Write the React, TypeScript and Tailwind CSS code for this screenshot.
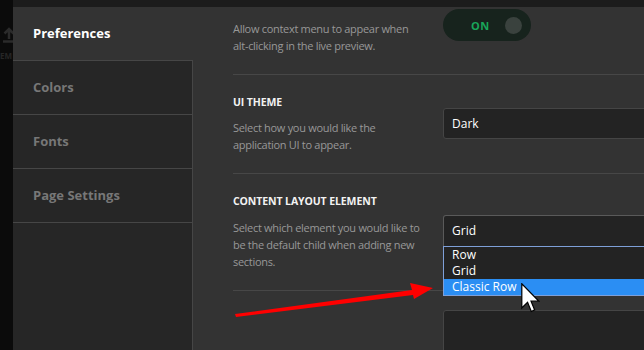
import React from "react";

const font = { fontFamily: '"Open Sans", "Noto Sans", "Liberation Sans", sans-serif' };

const tabs = ["Preferences", "Colors", "Fonts", "Page Settings"];

function Divider() {
  return <div className="h-px bg-[#474747]" />;
}

function Toggle() {
  return (
    <div className="flex h-[32px] w-[88px] items-center rounded-full bg-[#17231d] pl-[28px] pr-[9px]">
      <span className="text-[11px] font-bold leading-none tracking-[0.5px] text-[#19a65a]">ON</span>
      <span className="ml-auto h-[17px] w-[17px] rounded-full bg-[#3a423e]" />
    </div>
  );
}

function Section({
  title,
  text,
  pt,
  descGap,
  selectGap,
  children,
}: {
  title: string;
  text: string;
  pt: string;
  descGap: string;
  selectGap: string;
  children: React.ReactNode;
}) {
  return (
    <div className={`flex items-start pb-[20px] ${pt}`}>
      <div className="w-[210px] shrink-0">
        <div className="text-[10.5px] font-bold uppercase leading-[14px] tracking-[-0.1px] text-[#f2f2f2]">{title}</div>
        <p className={`w-[196px] text-[11px] leading-[17px] tracking-[-0.3px] text-[#989898] ${descGap}`}>{text}</p>
      </div>
      <div className={`relative w-[230px] shrink-0 ${selectGap}`}>{children}</div>
    </div>
  );
}

export default function App() {
  return (
    <div className="relative flex h-[350px] w-[644px] overflow-hidden bg-[#0b0b0b]" style={font}>
      {/* editor behind the dialog */}
      <div className="relative w-[13px] shrink-0 overflow-hidden">
        <svg className="absolute left-[2px] top-[27px]" width="14" height="16" viewBox="0 0 14 16" fill="none" stroke="#2b2b2b" strokeWidth="2.5">
          <path d="M7 12V2M2.5 6.5 7 2l4.5 4.5M1 14.5h12" />
        </svg>
        <span className="absolute left-0 top-[51px] text-[8px] font-bold leading-[10px] text-[#262626]">EM</span>
      </div>

      <div className="flex min-w-0 flex-1 flex-col">
        <div className="h-[7px] shrink-0 bg-[#1c1c1c]" />
        <div className="flex min-h-0 flex-1 bg-[#333333]">
          {/* sidebar */}
          <div className="flex w-[180px] shrink-0 flex-col">
            {tabs.map((t, i) => (
              <div
                key={t}
                className={`flex h-[54px] shrink-0 items-center border-b border-[#464646] pl-[20px] pt-[1px] text-[13px] font-bold ${
                  i === 0 ? "bg-[#333333] text-white" : "border-r bg-[#262626] text-[#777777]"
                }`}
              >
                {t}
              </div>
            ))}
            <div className="flex-1 border-r border-[#464646] bg-[#262626]" />
          </div>

          {/* content */}
          <div className="min-w-0 flex-1 pl-[40px]">
            <div className="flex h-[67px]">
              <div className="w-[210px] shrink-0 pt-[13px]">
                <p className="w-[188px] text-[11px] leading-[17px] tracking-[-0.3px] text-[#989898]">
                  Allow context menu to appear when alt-clicking in the live preview.
                </p>
              </div>
              <div className="mt-[2px]">
                <Toggle />
              </div>
            </div>
            <Divider />

            <Section
              title="UI Theme"
              text="Select how you would like the application UI to appear."
              pt="pt-[20px]"
              descGap="mt-[10px]"
              selectGap="mt-[13px]"
            >
              <div className="flex h-[31px] items-center rounded-[3px] border border-[#454545] bg-[#232323] pl-[8px] text-[12px] text-white">
                Dark
              </div>
            </Section>
            <Divider />

            <Section
              title="Content Layout Element"
              text="Select which element you would like to be the default child when adding new sections."
              pt="pt-[20px]"
              descGap="mt-[11px]"
              selectGap="mt-[21px]"
            >
              <div className="flex h-[31px] items-center rounded-t-[3px] border border-b-0 border-[#5a5a5a] bg-[#232323] pl-[8px] text-[12px] text-white">
                Grid
              </div>
              <div className="absolute left-0 top-full z-10 w-full border border-[#7e9fd8] bg-[#232323] text-[12px] text-white">
                <div className="h-[16px] pl-[8px] leading-[16px]">Row</div>
                <div className="h-[16px] pl-[8px] leading-[16px]">Grid</div>
                <div className="h-[16px] bg-[#2b8ef3] pl-[8px] leading-[16px]">Classic Row</div>
              </div>
            </Section>
            <Divider />

            <div className="flex pt-[19px]">
              <div className="w-[210px] shrink-0" />
              <div className="h-[60px] w-[230px] shrink-0 rounded-[3px] border border-[#454545] bg-[#232323]" />
            </div>
          </div>
        </div>
      </div>

      {/* annotation arrow */}
      <svg className="pointer-events-none absolute left-0 top-0 z-20" width="644" height="350">
        <polygon points="235,314 412,290 410,283 433,288 414,299 413,295 236,317" fill="#ff0000" />
      </svg>

      {/* mouse cursor */}
      <svg className="pointer-events-none absolute left-[521px] top-[283px] z-30" width="19" height="31" viewBox="0 0 12.5 20.5">
        <path d="M0.5 0.5V16.5L4.3 12.8L6.8 18.8L9 17.8L6.6 12H11.7Z" fill="#ffffff" stroke="#000000" strokeWidth="0.8" strokeLinejoin="miter" />
      </svg>
    </div>
  );
}
